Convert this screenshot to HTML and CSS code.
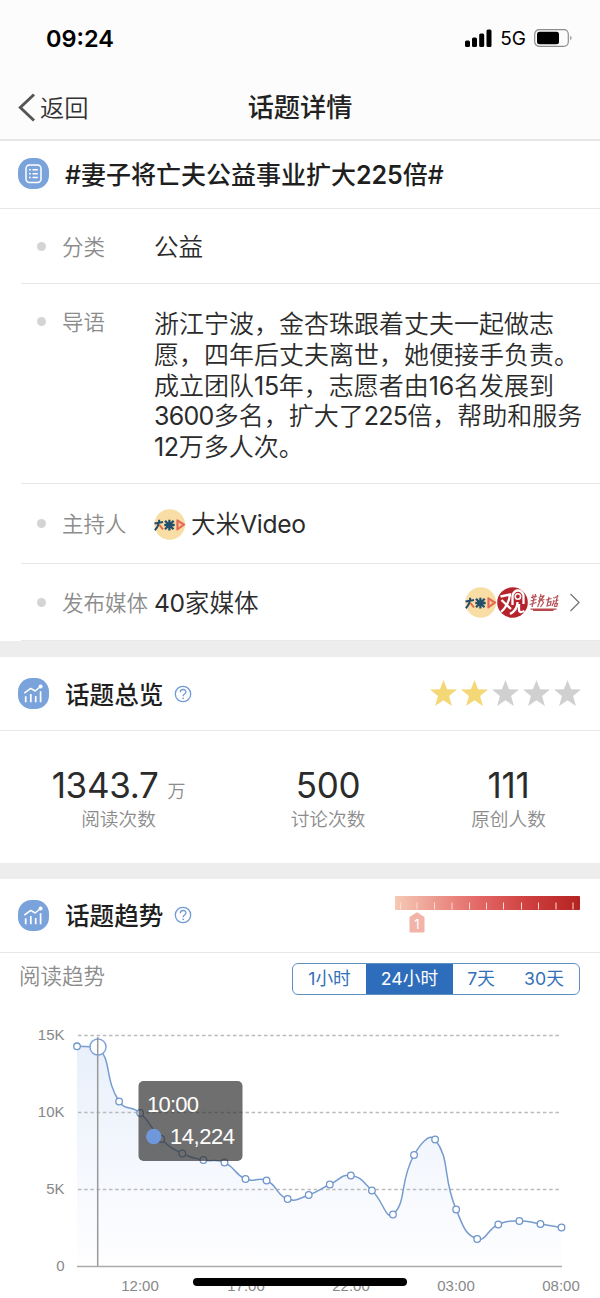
FILE: index.html
```html
<!DOCTYPE html>
<html lang="zh-CN">
<head>
<meta charset="utf-8">
<title>话题详情</title>
<link rel="stylesheet" href="styles.css">
</head>
<body>
<svg class="defs" width="0" height="0">
  <symbol id="trend" viewBox="0 0 31 31">
    <rect width="31" height="31" rx="13.500" fill="#7aa3dc"/>
    <g fill="none" stroke="#fff" stroke-width="1.500" stroke-linejoin="round">
      <path d="M7.700 18.300v6M12.800 16v8.300M17.700 18v6.300M22.600 13.300v11" stroke-width="1.700"/>
      <path d="M6.300 15.200l6.400-4.800 4.500 2.600 5-4.200"/>
      <circle cx="22.600" cy="8.500" r="1.300" fill="#fff"/>
    </g>
  </symbol>
  <symbol id="help" viewBox="0 0 18 18">
    <circle cx="9" cy="9" r="7.700" fill="none" stroke="#6f9ad8" stroke-width="1.300"/>
    <path d="M6.300 7.300c0-3.700 5.600-3.700 5.600-.3 0 2-2.800 2-2.800 4.200" fill="none" stroke="#6f9ad8" stroke-width="1.300"/>
    <circle cx="9.100" cy="13.300" r=".9" fill="#6f9ad8"/>
  </symbol>
  <symbol id="star" viewBox="0 0 27 26">
    <path d="M13.500 0l3.600 9.200 9.900.4-7.900 6.300 2.800 10-8.400-5.600-8.400 5.600 2.800-10L0 9.600l9.900-.4z"/>
  </symbol>
  <symbol id="dami" viewBox="0 0 32 31">
    <circle cx="15.700" cy="15.500" r="15.300" fill="#f8dda5"/>
    <g fill="none" stroke="#234e6b" stroke-width="2">
      <path d="M.5 14.500l8.500-1.500M5.200 10.800q0 6-4.400 10.500"/>
      <path d="M10.300 16h10.400M15.400 10.800v10.700M11 11.800l8.500 8.500M19.700 11.800L11 20.300" stroke-width="2.300"/>
    </g>
    <path d="M5.500 16l3.500 4.500" stroke="#e5674f" stroke-width="2"/>
    <path d="M23.300 11.300l7 4.300-7 5z" fill="#f4a080" stroke="#e46955" stroke-width="1.900" stroke-linejoin="round"/>
    <path d="M25 14.200v3.600l2-2z" fill="#f8dda5"/>
  </symbol>
</svg>

<header class="top">
  <div class="status">
    <span class="clock">09:24</span>
    <div class="signals">
      <svg width="27" height="18" viewBox="0 0 27 18"><rect y="11.500" width="5" height="6.500" rx="1.500"/><rect x="7" y="8.500" width="5" height="9.500" rx="1.500"/><rect x="14.200" y="4.500" width="5" height="13.500" rx="1.500"/><rect x="21.500" y=".5" width="5" height="17.500" rx="1.500"/></svg>
      <span class="net">5G</span>
      <svg width="39" height="18" viewBox="0 0 39 18"><rect x=".7" y=".7" width="33.600" height="16.600" rx="4.500" fill="none" stroke="#8b8b8b" stroke-width="1.200"/><rect x="3" y="2.800" width="22" height="12.400" rx="2.500"/><path d="M36.300 6.500q2.500 2.500 0 5z" fill="#888"/></svg>
    </div>
  </div>
  <nav class="nav">
    <a class="back"><svg width="18" height="30" viewBox="0 0 18 30"><path d="M16 1.500L2.300 14.500 16 27.500" fill="none" stroke="#555" stroke-width="2.900"/></svg>返回</a>
    <h1 class="page-title">话题详情</h1>
  </nav>
</header>

<section>
  <div class="head topic">
    <svg class="badge" viewBox="0 0 31 31"><rect width="31" height="31" rx="13.500" fill="#7aa3dc"/><rect x="8" y="7" width="15" height="17.500" rx="3.500" fill="none" stroke="#fff" stroke-width="1.500"/><path d="M11 11.800h1.800M14.500 11.800h5.300M11 15.700h1.800M14.500 15.700h5.300M11 19.600h1.800M14.500 19.600h5.300" stroke="#fff" stroke-width="1.500"/></svg>
    <h2 class="title">#妻子将亡夫公益事业扩大<b>225</b>倍#</h2>
  </div>
  <div class="rows">
    <div class="row category"><i class="dot"></i><span class="label">分类</span><span class="value">公益</span></div>
    <div class="row intro"><i class="dot"></i><span class="label">导语</span><p class="value">浙江宁波，金杏珠跟着丈夫一起做志<br>愿，四年后丈夫离世，她便接手负责。<br>成立团队<span class="latin">15</span>年，志愿者由<span class="latin">16</span>名发展到<br><span class="tight">3600</span>多名，扩大了<span class="tight">225</span>倍，帮助和服务<br><span class="latin">12</span>万多人次。</p></div>
    <div class="row host"><i class="dot"></i><span class="label">主持人</span><span class="value host-name"><svg width="32" height="31"><use href="#dami"/></svg><span>大米<span class="latin">Video</span></span></span></div>
    <div class="row media"><i class="dot"></i><span class="label">发布媒体</span><span class="value"><span class="latin">40</span>家媒体</span>
      <span class="logos">
        <svg width="32" height="31"><use href="#dami"/></svg>
        <svg width="31" height="31" viewBox="0 0 31 31"><circle cx="15.500" cy="15.500" r="15.300" fill="#b5242c"/><g fill="none" stroke="#fff" stroke-width="2.300"><path d="M3.500 9.500l9.500-2q-1 10-9 17.500M4.500 13l9.500 9"/><path d="M15.500 18V8.500q1.500-5 5.500-5t5.500 5V17M20.500 15q0 8-7.500 12M22 17v6q0 3.500 5.500 1"/><circle cx="20.900" cy="9.500" r="2.700" stroke-width="1.600"/></g></svg>
        <svg width="31" height="31" viewBox="0 0 31 31"><g fill="none" stroke="#b65055" stroke-width="1.200"><path d="M3 10.500l6-1.500M5 7.500l-.5 4M7.500 7l-.7 4M2.500 14l6-1.500M1.500 17.500l7-2M6 11l-2 9"/><path d="M10.500 10.500l6-2M13 7l-1.500 6M16 9l-5 6M10 14l6.500-1.500M12 14l-2.500 6M14 13.500l1.500 2-3 4.500"/><path d="M18 13l5.500-1.500M21 10l-2 9 3.500-1 .5-3.500-3.500 1"/><path d="M25.500 10l1 1.500M25 13.500l1 1-2 4.500M27 10.500l3.500-1.500M29.500 8l-1.500 8M26.500 14l4-1M27 16.500h2.500l-.8 3h-2.200z"/></g><path d="M2.500 21.500h26v1.200h-3v1.200H5v-1.200H2.500z" fill="#b9484d"/></svg>
      </span>
      <svg width="12" height="19" viewBox="0 0 12 19"><path d="M1.500 1l8.500 8.500L1.500 18" fill="none" stroke="#777" stroke-width="1.300"/></svg>
    </div>
  </div>
</section>

<section class="panel">
  <div class="head">
    <svg class="badge"><use href="#trend"/></svg><h2 class="title">话题总览</h2><svg class="help"><use href="#help"/></svg>
    <div class="stars"><svg class="star on"><use href="#star"/></svg><svg class="star on"><use href="#star"/></svg><svg class="star"><use href="#star"/></svg><svg class="star"><use href="#star"/></svg><svg class="star"><use href="#star"/></svg></div>
  </div>
  <div class="stats">
    <div class="stat"><div class="num">1343.7<small class="unit">万</small></div><div class="cap">阅读次数</div></div>
    <div class="stat"><div class="num">500</div><div class="cap">讨论次数</div></div>
    <div class="stat"><div class="num">111</div><div class="cap">原创人数</div></div>
  </div>
</section>

<section class="panel">
  <div class="head trend">
    <svg class="badge"><use href="#trend"/></svg><h2 class="title">话题趋势</h2><svg class="help"><use href="#help"/></svg>
    <svg class="heat" width="185" height="38" viewBox="0 0 185 38">
      <defs><linearGradient id="heat"><stop offset="0" stop-color="#f6c9b5"/><stop offset=".45" stop-color="#e36866"/><stop offset=".75" stop-color="#cc3c3c"/><stop offset="1" stop-color="#b42320"/></linearGradient></defs>
      <rect width="185" height="14" rx="1" fill="url(#heat)"/>
      <path d="M5.500 6.500v7M22 6.500v7M39.500 6.500v7M57 6.500v7M74.500 6.500v7M91.500 6.500v7M108.500 6.500v7M126.500 6.500v7M143.500 6.500v7M161 6.500v7M178 6.500v7" stroke="#f9dcd5"/>
      <path d="M14.500 21l7.500-4.800 7.500 4.800v14.500q0 1-1 1h-13q-1 0-1-1z" fill="#f2b3a8"/>
      <text class="level" x="22" y="33">1</text>
    </svg>
  </div>
  <div class="chart-head">
    <span class="chart-title">阅读趋势</span>
    <div class="tabs"><span>1小时</span><span class="active">24小时</span><span>7天</span><span>30天</span></div>
  </div>
  <svg class="chart" width="600" height="303" viewBox="0 995 600 303">
    <defs><linearGradient id="fade" x1="0" y1="1046" x2="0" y2="1266" gradientUnits="userSpaceOnUse"><stop offset="0" stop-color="#e9f0fb"/><stop offset="1" stop-color="#fefeff"/></linearGradient></defs>
    <path id="area" fill="url(#fade)"/>
    <path d="M78 1035.500H561M78 1112.500H561M78 1189.500H561" stroke="#bbb" stroke-width="1.300" stroke-dasharray="3.500 2.700"/>
    <path d="M77 1266.500H562" stroke="#aaa" stroke-width="1.300"/>
    <path id="line" fill="none" stroke="#769ccf" stroke-width="1.500"/>
    <g id="points" fill="#fff" stroke="#6f96cc" stroke-width="1.300"></g>
    <circle cx="98" cy="1047" r="8" fill="#fff" stroke="#7da3dc" stroke-width="1.500"/>
    <path d="M97.700 1037V1266" stroke="#999" stroke-width="1.500"/>
    <g class="axis y"><text x="64.500" y="1040">15K</text><text x="64.500" y="1117">10K</text><text x="64.500" y="1194">5K</text><text x="64.500" y="1271">0</text></g>
    <g class="axis x"><text x="140" y="1290.500">12:00</text><text x="246" y="1290.500">17:00</text><text x="351" y="1290.500">22:00</text><text x="456" y="1290.500">03:00</text><text x="561" y="1290.500">08:00</text></g>
    <rect x="138.500" y="1081" width="104" height="80" rx="5" fill="#323232" fill-opacity=".7"/>
    <circle cx="153.700" cy="1136.500" r="7.700" fill="#6f98dc"/>
    <g class="tip"><text x="147" y="1112" textLength="52">10:00</text><text x="170" y="1144" textLength="65">14,224</text></g>
  </svg>
</section>
<div class="home-bar"></div>
<script src="chart.js"></script>
</body>
</html>
```
FILE: styles.css
```css
* { box-sizing: border-box; }
body {
  margin: 0;
  width: 600px;
  height: 1298px;
  overflow: hidden;
  position: relative;
  background: #fff;
  color: #2b2b2b;
  font-family: Inter, "Noto Sans CJK SC", sans-serif;
}
svg { display: block; flex: none; }
h1, h2, p { margin: 0; }
.defs { position: absolute; }

.top { height: 141px; background: #fcfcfc; border-bottom: 2px solid #e6e6e6; }
.status { height: 76px; padding: 0 27px 0 46px; display: flex; align-items: center; justify-content: space-between; color: #000; }
.clock { font-size: 23.5px; font-weight: 600; }
.signals { display: flex; align-items: center; }
.net { margin: 2px 8px 0 8px; font-size: 19px; line-height: 22px; }
.nav { height: 63px; padding: 0 18px; display: grid; grid-template-columns: 1fr auto 1fr; align-items: center; }
.back { display: flex; align-items: center; gap: 4px; font-size: 24.3px; font-weight: 350; line-height: 30px; color: #333; }
.page-title { padding-top: 1px; font-size: 26.2px; font-weight: 500; line-height: 34px; color: #222; }

.head { height: 74px; padding: 0 20px 0 18px; display: flex; align-items: center; border-bottom: 1px solid #e8e8e8; }
.topic { height: 68px; padding-bottom: 2px; }
.trend { padding-bottom: 1px; }
.badge { width: 31px; height: 31px; margin-right: 16px; }
.title { padding-top: 2px; font-size: 24.6px; font-weight: 500; line-height: 34px; color: #1f1f1f; white-space: nowrap; }
.topic .title { font-size: 25px; }
.topic b { font-weight: 600; }
.help { width: 18px; height: 18px; margin-left: 11px; }

.rows { margin-left: 21px; }
.row { display: flex; align-items: center; padding-left: 16px; border-bottom: 1px solid #e8e8e8; }
.dot { width: 9px; height: 9px; margin-right: 16px; border-radius: 50%; background: #d4d4d4; }
.label { width: 92px; padding-top: 1px; font-size: 21.5px; font-weight: 350; line-height: 30px; color: #8c8c8c; white-space: nowrap; }
.value { padding-top: 2px; font-size: 24.6px; font-weight: 350; line-height: 31px; white-space: nowrap; }
.tight { font-weight: 400; letter-spacing: -.7px; }
.latin { font-weight: 400; letter-spacing: -.3px; }
.category { height: 75px; }
.intro { height: 200px; padding-top: 24px; align-items: flex-start; }
.intro .dot { margin-top: 9px; }
.intro .label { margin-top: -2px; }
.intro .value { padding-top: 1px; font-size: 25px; line-height: 30.8px; }
.host { height: 80px; }
.host-name { display: flex; align-items: center; gap: 5px; }
.media { height: 77px; padding-right: 19px; }
.logos { display: flex; margin-left: auto; margin-right: 10px; }

.panel { border-top: 16px solid #ededed; }
.stars { display: flex; gap: 4px; margin: 0 -1px 1px auto; }
.star { width: 27px; height: 26px; fill: #d0d0d0; }
.star.on { fill: #f4d777; }
.stats { height: 132px; padding-top: 32px; display: grid; grid-template-columns: 237px 182px 179px; text-align: center; }
.num { height: 44px; font-size: 35px; line-height: 44px; letter-spacing: -.3px; }
.unit { margin-left: 9px; font-size: 18px; font-weight: 350; line-height: 1; color: #8c8c8c; }
.cap { font-size: 18.7px; font-weight: 350; line-height: 26px; color: #8c8c8c; }

.heat { margin-left: auto; }
.level { font-size: 13px; fill: #fff; text-anchor: middle; }
.chart-head { height: 42px; padding: 10px 20px 0 19px; display: flex; justify-content: space-between; align-items: flex-start; }
.chart-title { font-size: 21.5px; font-weight: 350; line-height: 26px; color: #8c8c8c; }
.tabs { width: 288px; height: 32px; display: grid; grid-template-columns: 73px 87px 56px 1fr; border: 1px solid #5f8fc2; border-radius: 6px; overflow: hidden; font-size: 17.7px; font-weight: 400; line-height: 30px; text-align: center; color: #3270b8; }
.tabs .active { background: #2e6dbb; color: #fff; }

.axis { font-family: "Liberation Sans", sans-serif; font-size: 15px; fill: #888; }
.axis.y { text-anchor: end; }
.axis.x { text-anchor: middle; }
.tip { font-family: "Liberation Sans", sans-serif; font-size: 22px; fill: #fff; }
.home-bar { position: absolute; left: 193px; top: 1278px; width: 214px; height: 8px; border-radius: 4px; background: #000; }
```
FILE: chart.js
```js
const ys = [1046.3, 1047, 1101.5, 1113, 1139, 1153.5, 1160, 1162.5, 1179, 1180.5, 1199, 1195,
  1184.5, 1175.5, 1190.5, 1214.5, 1155, 1139.5, 1209.5, 1239, 1224.5, 1221, 1224, 1227.5];
const pts = ys.map((y, i) => [77 + i * 21.065, y]);
const SMOOTH = 0.5;

// Control points before and after each point, weighted by neighbouring segment length.
function controls(i) {
  const p = pts[i], a = pts[i - 1], b = pts[i + 1];
  if (!a || !b || i === 1) return [p, p];
  const la = Math.hypot(p[0] - a[0], p[1] - a[1]);
  const lb = Math.hypot(b[0] - p[0], b[1] - p[1]);
  const r = lb / (la + lb);
  const vx = (b[0] - a[0]) * SMOOTH, vy = (b[1] - a[1]) * SMOOTH;
  return [[p[0] - vx * (1 - r), p[1] - vy * (1 - r)], [p[0] + vx * r, p[1] + vy * r]];
}

let d = `M${pts[0]}`;
for (let i = 1; i < pts.length; i++) {
  // The second segment leaves its point on a steep diagonal.
  const start = i === 2 ? [pts[1][0] + 14, pts[1][1] + 14] : controls(i - 1)[1];
  d += `C${start} ${controls(i)[0]} ${pts[i]}`;
}
document.getElementById('line').setAttribute('d', d);
document.getElementById('area').setAttribute('d', d + `V1266H77Z`);
document.getElementById('points').innerHTML =
  pts.map(([x, y]) => `<circle cx="${x}" cy="${y}" r="3.3"/>`).join('');
```
